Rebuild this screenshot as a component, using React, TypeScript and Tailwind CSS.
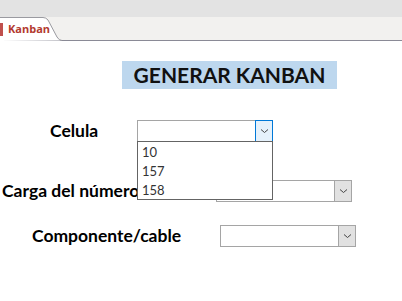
import React from "react";

function Combo({ open, className }: { open?: boolean; className?: string }) {
    return (
        <div className={"relative h-[22px] w-[136px] border border-[#a5a5a5] bg-white " + (className ?? "")}>
            <div
                className={
                    "absolute right-[-1px] top-[-1px] flex h-[22px] w-[18px] items-center justify-center border " +
                    (open ? "border-[#0078d7] bg-[#e5f1fb]" : "border-[#a5a5a5] bg-[#e1e1e1]")
                }
            >
                <svg width="9" height="6" viewBox="0 0 9 6">
                    <path d="M1 1.5 L4.5 4.5 L8 1.5" fill="none" stroke="#444" strokeWidth="1" />
                </svg>
            </div>
            {open && (
                <div className="absolute left-[-1px] top-[20px] z-10 h-[59px] w-[136px] border border-[#646464] bg-white pl-[4px] pt-[1px] text-[13px] leading-[19px] text-[#333]">
                    <div>10</div>
                    <div>157</div>
                    <div>158</div>
                </div>
            )}
        </div>
    );
}

export default function App() {
    return (
        <div className="h-[301px] w-[402px] overflow-hidden bg-white" style={{ fontFamily: "Lato, 'Open Sans', sans-serif" }}>
            <div className="h-[17px] bg-[#e3e3e3]" />
            <div className="relative flex h-[24px] items-end border-b border-[#8a8a96] bg-[#f2f1ef]">
                <div className="relative z-10 mb-[-1px] flex h-[24px] w-[62px] items-center">
                    <svg className="absolute inset-0" width="62" height="24" viewBox="0 0 62 24">
                        <path d="M0 0.5 L43 0.5 Q46 0.5 48 3 L57 20 Q59 23.5 62 23.5 L0 24 Z" fill="white" />
                        <path d="M0 0.5 L43 0.5 Q46 0.5 48 3 L57 20 Q59 23.5 62 23.5" fill="none" stroke="#9a9aa0" />
                    </svg>
                    <div className="relative h-[13px] w-[3px] bg-[#c0504d]" />
                    <span className="relative ml-[5px] text-[11px] font-bold text-[#b33a2f]" style={{ fontFamily: "'Open Sans', sans-serif" }}>
                        Kanban
                    </span>
                </div>
            </div>
            <div className="flex flex-col">
                <div className="ml-[122px] mt-[20px] flex h-[28px] w-[215px] items-center justify-center bg-[#bdd7ee] text-[21px] font-bold text-[#111]">
                    GENERAR KANBAN
                </div>
                <div className="mt-[31px] flex items-center">
                    <div className="ml-[50px] w-[87px] text-[17.5px] font-bold leading-[22px] text-black">Celula</div>
                    <Combo open />
                </div>
                <div className="mt-[38px] flex items-center">
                    <div className="ml-[2px] w-[135px] overflow-hidden whitespace-nowrap text-[17.5px] font-bold leading-[22px] text-black">Carga del número de parte</div>
                    <Combo className="ml-[79px]" />
                </div>
                <div className="mt-[23px] flex items-center">
                    <div className="ml-[32px] w-[188px] text-[17.5px] font-bold leading-[22px] text-black">Componente/cable</div>
                    <Combo />
                </div>
            </div>
        </div>
    );
}
